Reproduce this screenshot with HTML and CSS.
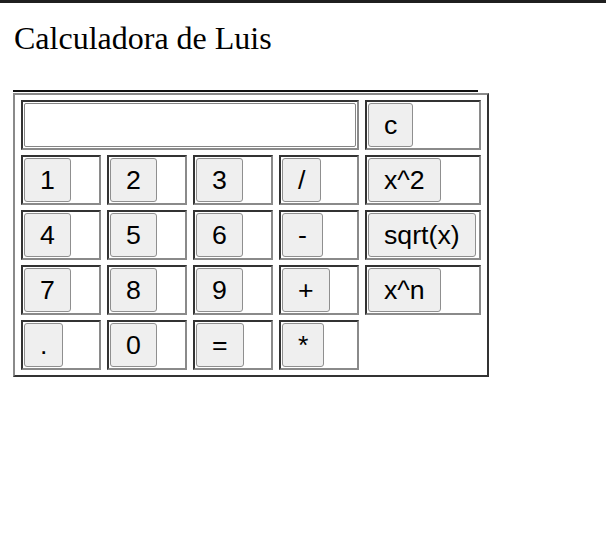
FILE: index.html
```html
<!DOCTYPE html>
<html lang="es">
<head>
<meta charset="utf-8">
<title>Calculadora de Luis</title>
<link rel="stylesheet" href="styles.css">
</head>
<body>
<div class="topbar"></div>
<h1 class="title">Calculadora de Luis</h1>
<div class="rule"></div>
<table class="calc">
  <tr>
    <td class="cell" colspan="4"><input class="display" type="text"></td>
    <td class="cell wide"><button class="key">c</button></td>
  </tr>
  <tr>
    <td class="cell"><button class="key">1</button></td>
    <td class="cell"><button class="key">2</button></td>
    <td class="cell"><button class="key">3</button></td>
    <td class="cell"><button class="key">/</button></td>
    <td class="cell wide"><button class="key">x^2</button></td>
  </tr>
  <tr>
    <td class="cell"><button class="key">4</button></td>
    <td class="cell"><button class="key">5</button></td>
    <td class="cell"><button class="key">6</button></td>
    <td class="cell"><button class="key">-</button></td>
    <td class="cell wide"><button class="key">sqrt(x)</button></td>
  </tr>
  <tr>
    <td class="cell"><button class="key">7</button></td>
    <td class="cell"><button class="key">8</button></td>
    <td class="cell"><button class="key">9</button></td>
    <td class="cell"><button class="key">+</button></td>
    <td class="cell wide"><button class="key">x^n</button></td>
  </tr>
  <tr>
    <td class="cell"><button class="key">.</button></td>
    <td class="cell"><button class="key">0</button></td>
    <td class="cell"><button class="key">=</button></td>
    <td class="cell"><button class="key">*</button></td>
  </tr>
</table>
</body>
</html>
```
FILE: styles.css
```css
html, body {
  margin: 0;
  padding: 0;
  background: #ffffff;
}

.topbar {
  height: 3px;
  background: #1f1f1f;
}

.title {
  margin: 17px 0 0 14px;
  font-family: "Liberation Serif", "Times New Roman", serif;
  font-size: 32px;
  font-weight: normal;
  line-height: 36px;
  color: #000;
}

.rule {
  margin: 34px 0 1px 13px;
  width: 465px;
  height: 0;
  border-top: 2px solid #111;
}

.calc {
  margin-left: 13px;
  border-style: solid;
  border-width: 2px;
  border-color: #8a8a8a #333333 #333333 #8a8a8a;
  border-collapse: separate;
  border-spacing: 6px 5px;
}

.cell {
  width: 74px;
  padding: 1px;
  border-style: solid;
  border-width: 2px;
  border-color: #333333 #8a8a8a #8a8a8a #333333;
  text-align: left;
  vertical-align: middle;
}

.cell.wide {
  width: 110px;
}

.display {
  display: block;
  box-sizing: border-box;
  width: 332px;
  height: 44px;
  margin: 0;
  border: 1px solid #858585;
  border-radius: 2px;
  background: #fff;
}

.key {
  display: block;
  box-sizing: border-box;
  height: 44px;
  margin: 0;
  padding: 0 15px;
  font-family: "Liberation Sans", Arial, sans-serif;
  font-size: 26.7px;
  color: #000;
  background: #efefef;
  border: 1px solid #8f8f8f;
  border-radius: 3px;
}
```
